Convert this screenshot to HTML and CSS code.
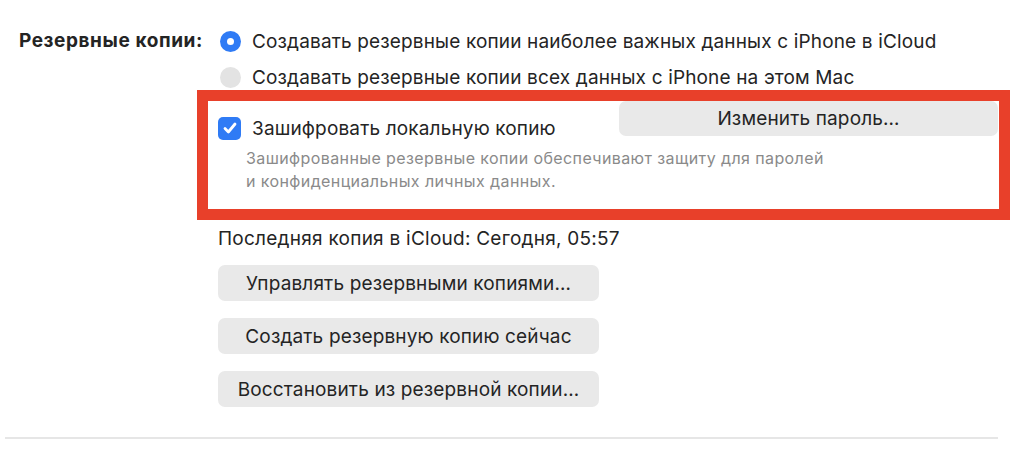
FILE: index.html
```html
<!DOCTYPE html>
<html lang="ru">
<head>
<meta charset="utf-8">
<link rel="stylesheet" href="styles.css">
</head>
<body>
<div class="prefs">
  <div class="label">Резервные копии:</div>
  <div class="content">
    <div class="radio-row">
      <span class="radio on"></span>
      <span>Создавать резервные копии наиболее важных данных с iPhone в iCloud</span>
    </div>
    <div class="radio-row">
      <span class="radio"></span>
      <span>Создавать резервные копии всех данных с iPhone на этом Mac</span>
    </div>
    <div class="highlight">
      <div class="enc-head">
        <div class="check-row">
          <span class="checkbox">
            <svg width="16" height="16" viewBox="0 0 16 16"><path d="M3 8.6 L6.4 12 L13 4" fill="none" stroke="#fff" stroke-width="2.8" stroke-linecap="round" stroke-linejoin="round"/></svg>
          </span>
          <span>Зашифровать локальную копию</span>
        </div>
        <div class="btn btn-wide">Изменить пароль…</div>
      </div>
      <div class="desc">Зашифрованные резервные копии обеспечивают защиту для паролей<br>и конфиденциальных личных данных.</div>
    </div>
    <div class="last">Последняя копия в iCloud: Сегодня, 05:57</div>
    <div class="buttons">
      <div class="btn">Управлять резервными копиями…</div>
      <div class="btn">Создать резервную копию сейчас</div>
      <div class="btn">Восстановить из резервной копии…</div>
    </div>
  </div>
</div>
<div class="sep"></div>
</body>
</html>
```
FILE: styles.css
```css
html, body {
  margin: 0;
  padding: 0;
  background: #ffffff;
}
body {
  width: 1024px;
  height: 452px;
  overflow: hidden;
  font-family: Inter, "Noto Sans", "Liberation Sans", sans-serif;
  color: #242424;
  font-size: 19px;
  letter-spacing: 0.15px;
}
.prefs {
  display: grid;
  grid-template-columns: 218px 1fr;
  padding-top: 26px;
}
.label {
  font-weight: 700;
  text-align: right;
  padding-right: 15px;
  line-height: 30px;
  height: 30px;
  letter-spacing: 0.6px;
}
.content {
  display: flex;
  flex-direction: column;
}
.radio-row {
  display: flex;
  align-items: center;
  height: 30px;
  gap: 11px;
  margin-left: 2px;
}
.radio-row + .radio-row {
  margin-top: 6px;
}
.radio {
  width: 21px;
  height: 21px;
  border-radius: 50%;
  background: #e3e3e3;
  flex: none;
  display: flex;
  align-items: center;
  justify-content: center;
}
.radio.on {
  background: #2f7bf5;
}
.radio.on::after {
  content: "";
  width: 7px;
  height: 7px;
  border-radius: 50%;
  background: #fff;
}
.highlight {
  box-sizing: border-box;
  margin-top: -2px;
  margin-left: -21px;
  width: 813px;
  border: 11px solid #e8402a;
  padding: 0 1px 16px 10px;
}
.enc-head {
  display: flex;
  justify-content: space-between;
  align-items: flex-start;
}
.check-row {
  display: flex;
  align-items: center;
  gap: 11px;
  margin-top: 15px;
  height: 24px;
}
.checkbox {
  width: 23px;
  height: 23px;
  border-radius: 5px;
  background: #2f7bf5;
  display: flex;
  align-items: center;
  justify-content: center;
  flex: none;
}
.checkbox svg {
  display: block;
}
.btn {
  background: #e9e9e9;
  border-radius: 7px;
  height: 36px;
  width: 381px;
  display: flex;
  align-items: center;
  justify-content: center;
  font-size: 19px;
  color: #242424;
}
.btn-wide {
  width: 379px;
  height: 35px;
}
.desc {
  margin-top: 7px;
  padding-left: 28px;
  font-size: 16px;
  letter-spacing: 0.4px;
  line-height: 23px;
  color: #8a8a8a;
}
.last {
  margin-top: 7px;
  line-height: 24px;
  letter-spacing: 0.25px;
}
.buttons {
  margin-top: 14px;
  display: flex;
  flex-direction: column;
  gap: 17px;
}
.sep {
  margin: 30px 0 0 5px;
  width: 993px;
  height: 2px;
  background: #e6e6e6;
}
```
